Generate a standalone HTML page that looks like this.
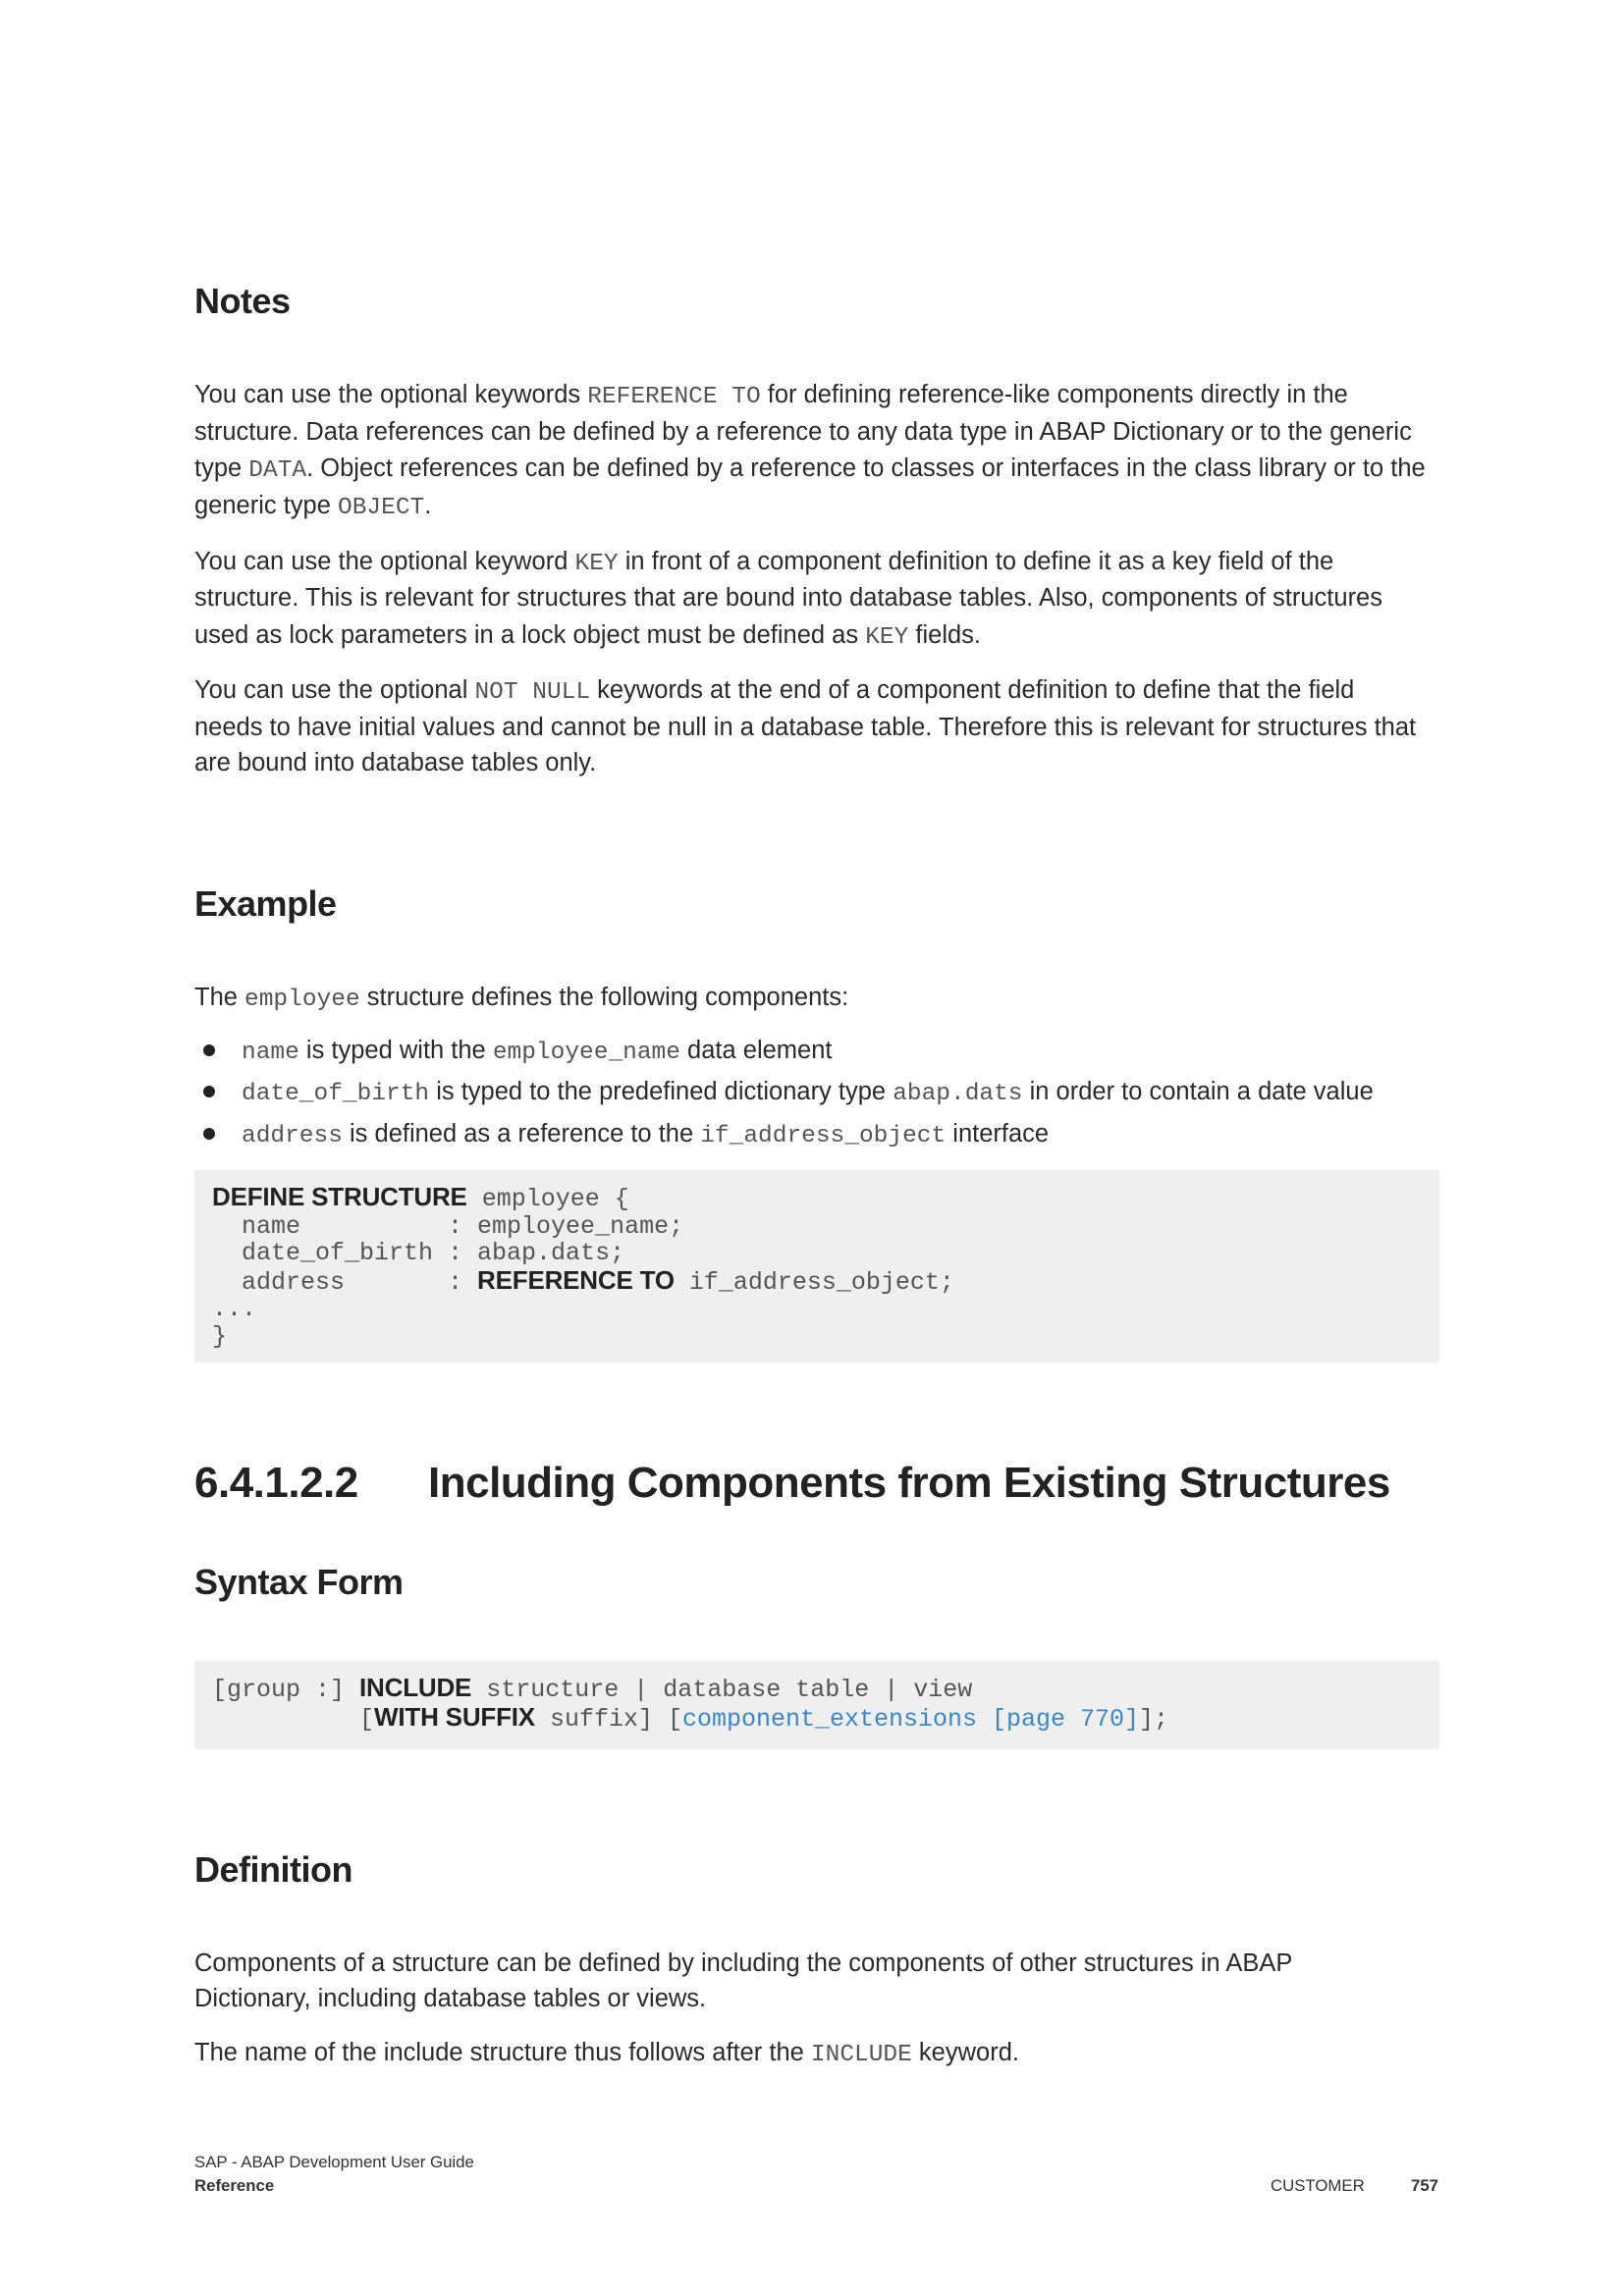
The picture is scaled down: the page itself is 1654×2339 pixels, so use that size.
<!DOCTYPE html>
<html><head><meta charset="utf-8"><style>
body{margin:0;width:1654px;height:2339px;background:#fff;position:relative;font-family:"Liberation Sans",sans-serif;color:#2a2a2a;overflow:hidden}
.l{position:absolute;left:198px;white-space:nowrap;font-size:25.5px;line-height:36px;letter-spacing:0}
.m{font-family:"Liberation Mono",monospace;color:#555;font-size:24.5px;letter-spacing:0}
.h{position:absolute;left:198px;white-space:nowrap;font-weight:bold;font-size:36px;line-height:44px;color:#222;letter-spacing:-0.5px}
.box{position:absolute;left:198px;width:1268px;background:#efefef}
.c{position:absolute;white-space:pre;font-family:"Liberation Mono",monospace;font-size:25px;line-height:27.5px;color:#555}
.k{font-family:"Liberation Sans",sans-serif;font-weight:bold;color:#222;letter-spacing:-0.2px;font-size:26px}
.b{position:absolute;left:207px;width:12px;height:12px;border-radius:50%;background:#222}
.f{position:absolute;font-size:16.8px;line-height:20px;white-space:nowrap;color:#333}
.lnk{color:#3a86c8}
</style></head><body>
<div class="h" style="top:285px">Notes</div>
<div class="l" style="top:384px">You can use the optional keywords <span class="m">REFERENCE TO</span> for defining reference-like components directly in the</div>
<div class="l" style="top:422px">structure. Data references can be defined by a reference to any data type in ABAP Dictionary or to the generic</div>
<div class="l" style="top:459px">type <span class="m">DATA</span>. Object references can be defined by a reference to classes or interfaces in the class library or to the</div>
<div class="l" style="top:497px">generic type <span class="m">OBJECT</span>.</div>
<div class="l" style="top:554px">You can use the optional keyword <span class="m">KEY</span> in front of a component definition to define it as a key field of the</div>
<div class="l" style="top:591px">structure. This is relevant for structures that are bound into database tables. Also, components of structures</div>
<div class="l" style="top:629px">used as lock parameters in a lock object must be defined as <span class="m">KEY</span> fields.</div>
<div class="l" style="top:685px">You can use the optional <span class="m">NOT NULL</span> keywords at the end of a component definition to define that the field</div>
<div class="l" style="top:723px">needs to have initial values and cannot be null in a database table. Therefore this is relevant for structures that</div>
<div class="l" style="top:759px">are bound into database tables only.</div>
<div class="h" style="top:899px">Example</div>
<div class="l" style="top:998px">The <span class="m">employee</span> structure defines the following components:</div>
<div class="b" style="top:1064px"></div>
<div class="l" style="left:246px;top:1052px"><span class="m">name</span> is typed with the <span class="m">employee_name</span> data element</div>
<div class="b" style="top:1106px"></div>
<div class="l" style="left:246px;top:1094px"><span class="m">date_of_birth</span> is typed to the predefined dictionary type <span class="m">abap.dats</span> in order to contain a date value</div>
<div class="b" style="top:1149px"></div>
<div class="l" style="left:246px;top:1137px"><span class="m">address</span> is defined as a reference to the <span class="m">if_address_object</span> interface</div>
<div class="box" style="top:1192px;height:196px"></div>
<div class="c" style="left:216px;top:1206px"><span class="k">DEFINE STRUCTURE</span> employee {
  name          : employee_name;
  date_of_birth : abap.dats;
  address       : <span class="k">REFERENCE TO</span> if_address_object;
...
}</div>
<div class="h" style="top:1486px;font-size:44px;line-height:50px">6.4.1.2.2</div>
<div class="h" style="left:436px;top:1486px;font-size:44px;line-height:50px">Including Components from Existing Structures</div>
<div class="h" style="top:1590px">Syntax Form</div>
<div class="box" style="top:1692px;height:90px"></div>
<div class="c" style="left:216px;top:1706px">[group :] <span class="k">INCLUDE</span> structure | database table | view
          [<span class="k">WITH SUFFIX</span> suffix] [<span class="lnk">component_extensions [page 770]</span>];</div>
<div class="h" style="top:1883px">Definition</div>
<div class="l" style="top:1982px">Components of a structure can be defined by including the components of other structures in ABAP</div>
<div class="l" style="top:2018px">Dictionary, including database tables or views.</div>
<div class="l" style="top:2073px">The name of the include structure thus follows after the <span class="m">INCLUDE</span> keyword.</div>
<div class="f" style="left:198px;top:2193px">SAP - ABAP Development User Guide</div>
<div class="f" style="left:198px;top:2217px;font-weight:bold">Reference</div>
<div class="f" style="left:1294px;top:2217px">CUSTOMER</div>
<div class="f" style="left:1437px;top:2217px;font-weight:bold">757</div>
</body></html>
